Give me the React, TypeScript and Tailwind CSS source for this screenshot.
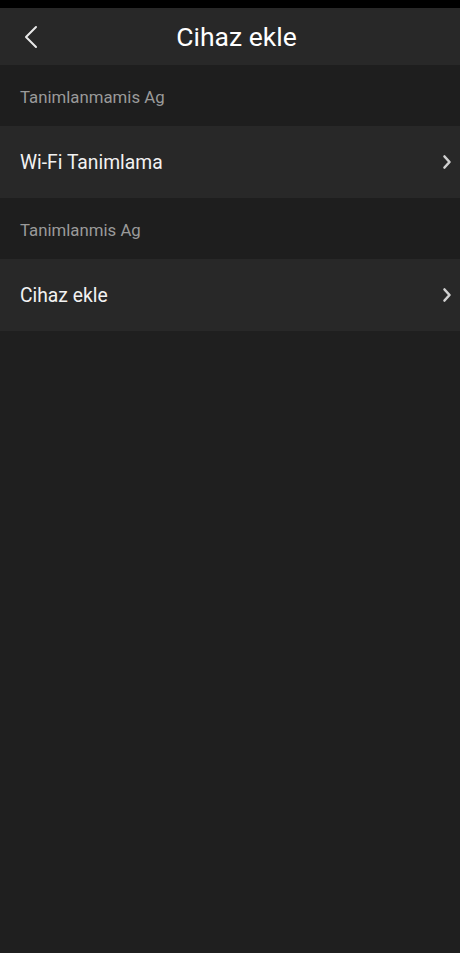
import React from "react";

function Chevron() {
  return (
    <svg width="10" height="16" viewBox="0 0 10 16" className="shrink-0">
      <path d="M2.5 2.5 L7.5 8 L2.5 13.5" fill="none" stroke="#d0d0d0" strokeWidth="2.6" strokeLinecap="round" strokeLinejoin="round" />
    </svg>
  );
}

function Section({ label }: { label: string }) {
  return (
    <div className="h-[61px] flex items-center pl-[20px] bg-[#1e1e1e]">
      <span className="text-[16.8px] text-[#9a9a9a] pt-[4px]">{label}</span>
    </div>
  );
}

function Row({ label }: { label: string }) {
  return (
    <div className="h-[72px] flex items-center justify-between pl-[20px] pr-[8px] bg-[#282828]">
      <span className="text-[19.3px] text-[#f2f2f2] pt-[2px]">{label}</span>
      <Chevron />
    </div>
  );
}

export default function App() {
  return (
    <div
      className="w-[460px] h-[953px] bg-[#1f1f1f] flex flex-col"
      style={{ fontFamily: "Roboto, 'Noto Sans', sans-serif" }}
    >
      <div className="h-[8px] bg-black shrink-0" />
      <div className="h-[57px] bg-[#282828] flex items-center relative shrink-0">
        <div className="pl-[22px] flex items-center">
          <svg width="18" height="24" viewBox="0 0 18 24">
            <path d="M14 2 L4 12 L14 22" fill="none" stroke="#e8e8e8" strokeWidth="2" strokeLinecap="round" strokeLinejoin="round" />
          </svg>
        </div>
        <div className="absolute inset-0 flex items-center justify-center pl-[13px] pointer-events-none">
          <span className="text-[26.5px] text-white">Cihaz ekle</span>
        </div>
      </div>
      <Section label="Tanimlanmamis Ag" />
      <Row label="Wi-Fi Tanimlama" />
      <Section label="Tanimlanmis Ag" />
      <Row label="Cihaz ekle" />
      <div className="flex-1 bg-[#1f1f1f]" />
    </div>
  );
}
